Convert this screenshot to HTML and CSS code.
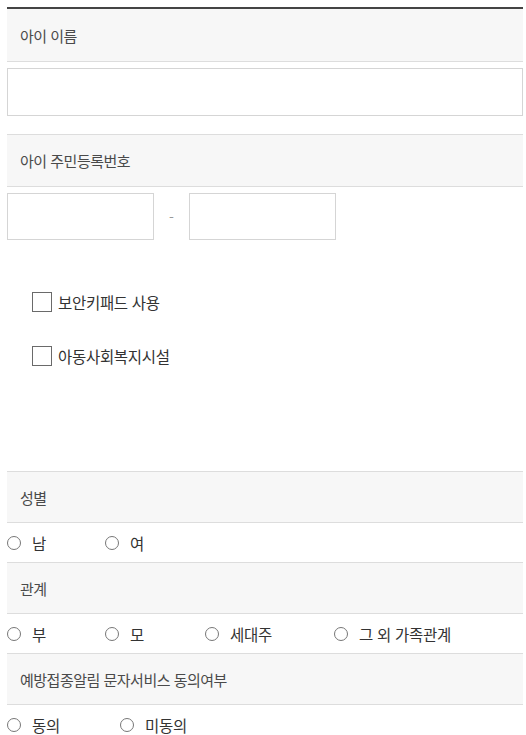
FILE: index.html
```html
<!DOCTYPE html>
<html lang="ko">
<head>
<meta charset="utf-8">
<title>아이 정보</title>
<link rel="stylesheet" href="styles.css">
</head>
<body>
<div class="wrap">
  <div class="head first">아이 이름</div>
  <input class="field full" type="text">

  <div class="head bordered gap-top">아이 주민등록번호</div>
  <div class="ssn">
    <input class="field part" type="text">
    <span class="dash">-</span>
    <input class="field part" type="text">
  </div>

  <div class="checks">
    <label class="check"><span class="box"></span><span>보안키패드 사용</span></label>
    <label class="check"><span class="box"></span><span>아동사회복지시설</span></label>
  </div>

  <div class="head bordered">성별</div>
  <div class="radios">
    <label class="opt w98"><span class="circle"></span><span>남</span></label>
    <label class="opt"><span class="circle"></span><span>여</span></label>
  </div>

  <div class="head bordered">관계</div>
  <div class="radios">
    <label class="opt w98"><span class="circle"></span><span>부</span></label>
    <label class="opt w100"><span class="circle"></span><span>모</span></label>
    <label class="opt w129"><span class="circle"></span><span>세대주</span></label>
    <label class="opt"><span class="circle"></span><span>그 외 가족관계</span></label>
  </div>

  <div class="head bordered">예방접종알림 문자서비스 동의여부</div>
  <div class="radios">
    <label class="opt w113"><span class="circle"></span><span>동의</span></label>
    <label class="opt"><span class="circle"></span><span>미동의</span></label>
  </div>
</div>
</body>
</html>
```

FILE: styles.css
```css
* { box-sizing: border-box; }

body {
  margin: 0;
  background: #fff;
  font-family: "Noto Sans CJK KR", "Noto Sans", sans-serif;
  color: #333;
}

.wrap {
  margin: 7px 3px 0 7px;
  border-top: 2px solid #444;
}

.head {
  display: flex;
  align-items: center;
  height: 52px;
  padding-left: 13px;
  background: #f7f7f7;
  border-bottom: 1px solid #ddd;
  font-size: 15px;
  letter-spacing: -0.5px;
  color: #4a4a4a;
}

.head.first { height: 53px; }

.head.bordered {
  border-top: 1px solid #ddd;
}

.head.gap-top { margin-top: 18px; height: 53px; }

.field {
  display: block;
  border: 1px solid #d5d5d5;
  background: #fff;
  margin: 0;
  padding: 0 10px;
  outline: none;
}

.field.full {
  width: 100%;
  height: 48px;
  margin-top: 6px;
}

.ssn {
  display: flex;
  align-items: center;
  margin-top: 6px;
}

.field.part {
  width: 147px;
  height: 47px;
}

.dash {
  width: 35px;
  text-align: center;
  color: #999;
  font-size: 14px;
}

.checks {
  display: flex;
  flex-direction: column;
  gap: 34px;
  padding: 52px 0 105px 25px;
}

.check {
  display: flex;
  align-items: center;
  gap: 6px;
  height: 20px;
  font-size: 15.5px;
  letter-spacing: -0.3px;
  color: #333;
}

.box {
  width: 20px;
  height: 20px;
  border: 1.5px solid #6a6a6a;
  background: #fff;
}

.radios {
  display: flex;
  align-items: center;
  height: 39px;
}

.opt {
  display: flex;
  align-items: center;
  gap: 11px;
  font-size: 15.5px;
  letter-spacing: -0.3px;
  color: #333;
}

.w98 { width: 98px; }
.w100 { width: 100px; }
.w113 { width: 113px; }
.w129 { width: 129px; }

.circle {
  flex: none;
  width: 14px;
  height: 14px;
  border: 1px solid #777;
  border-radius: 50%;
  background: #fff;
}
```
